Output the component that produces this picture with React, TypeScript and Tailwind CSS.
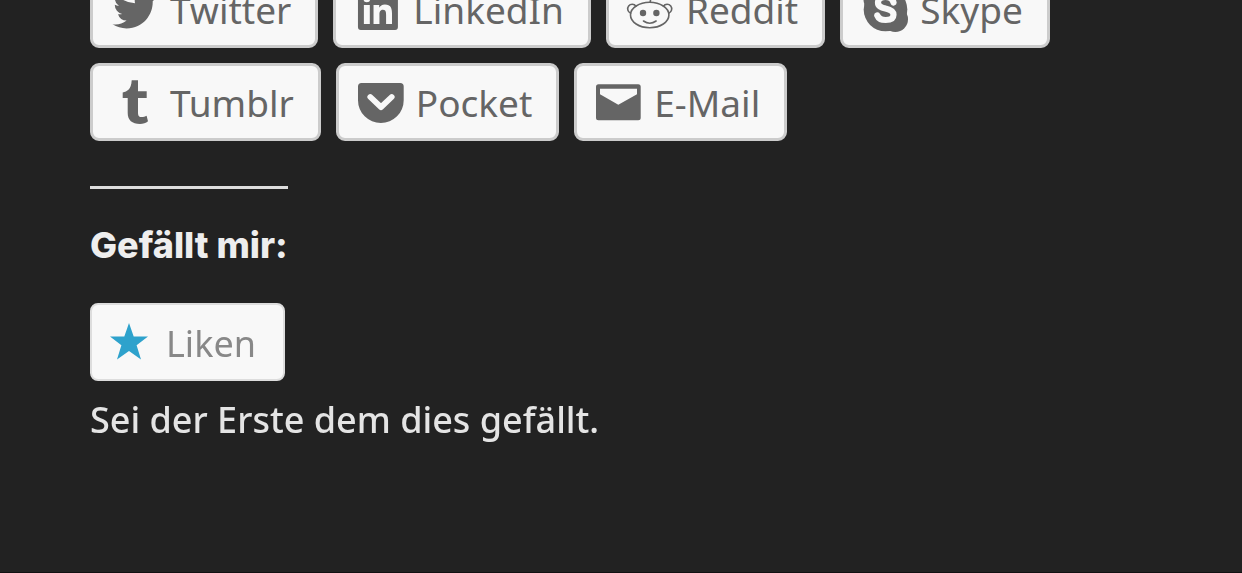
import type { ReactNode } from "react";

function Icon({ children }: { children: ReactNode }) {
  return (
    <svg viewBox="0 0 48 48" className="size-12 shrink-0 overflow-visible fill-current" aria-hidden="true">
      {children}
    </svg>
  );
}

const twitter = (
  <Icon>
    <path
      transform="translate(-3 -1.9) scale(2.24)"
      d="M22.23 5.924a8.212 8.212 0 01-2.357.646 4.115 4.115 0 001.804-2.27 8.221 8.221 0 01-2.606.996 4.103 4.103 0 00-6.991 3.742 11.647 11.647 0 01-8.457-4.287 4.087 4.087 0 00-.556 2.063 4.1 4.1 0 001.825 3.415 4.09 4.09 0 01-1.859-.513v.052a4.104 4.104 0 003.292 4.023 4.099 4.099 0 01-1.853.07 4.11 4.11 0 003.833 2.85A8.236 8.236 0 012 18.411a11.616 11.616 0 006.29 1.843c7.547 0 11.675-6.252 11.675-11.675 0-.178-.004-.355-.012-.531a8.298 8.298 0 002.047-2.123z"
    />
  </Icon>
);

const linkedin = (
  <Icon>
    <path
      transform="translate(-2.7 -1.7) scale(2.22)"
      d="M19.7 3H4.3A1.3 1.3 0 003 4.3v15.4A1.3 1.3 0 004.3 21h15.4a1.3 1.3 0 001.3-1.3V4.3A1.3 1.3 0 0019.7 3zM8.339 18.338H5.667v-8.59h2.672v8.59zM7.004 8.574a1.548 1.548 0 11-.002-3.096 1.548 1.548 0 01.002 3.096zm11.335 9.764H15.67v-4.177c0-.996-.017-2.278-1.387-2.278-1.389 0-1.601 1.086-1.601 2.206v4.249h-2.667v-8.59h2.559v1.174h.037c.356-.675 1.227-1.387 2.526-1.387 2.703 0 3.203 1.779 3.203 4.092v4.711z"
    />
  </Icon>
);

const reddit = (
  <Icon>
    <g fill="none" stroke="currentColor" strokeWidth="1.6" strokeLinecap="round">
      <ellipse cx="22.7" cy="30" rx="19.2" ry="12.7" />
      <path d="M3.6 28.2A4.6 4.6 0 1 1 9 21.2M41.8 28.2A4.6 4.6 0 1 0 36.4 21.2" />
      <path d="M23.2 17.3L24.5 7.5l8 1.8" />
      <path d="M16.5 36q6.2 4.4 12.6 0" />
      <circle cx="36" cy="10" r="3" />
    </g>
    <circle cx="16" cy="28" r="3.2" />
    <circle cx="29.4" cy="28" r="3.2" />
  </Icon>
);

const skype = (
  <Icon>
    <circle cx="24.5" cy="24.5" r="21.8" />
    <circle cx="15" cy="14.5" r="12.5" />
    <circle cx="34.3" cy="34.3" r="12.7" />
    <path
      d="M32.5 17.5C31.5 13.8 28.5 12 24.5 12C19.500 12 17 14.500 17 17.700C17 21.500 20.500 22.500 24.500 23.500C29 24.500 32.500 25.700 32.500 29.700C32.500 33.300 29.500 35 24.700 35C20.200 35 17.500 33.500 16.300 30.500"
      fill="none"
      stroke="#f8f8f8"
      strokeWidth="6.2"
      strokeLinecap="round"
    />
  </Icon>
);

const tumblr = (
  <Icon>
    <path d="M20.7 2.3H27v11h8.7V20H27v14.5c0 4 1.6 4.6 3.6 4.6 1.8 0 3.6-.6 5-1.4l1.4 5.6c-2 1.7-5 2.6-8 2.6-8 0-12.3-4-12.3-11V20h-5v-5.4c4.500-1.300 8.500-3 9-12.300z" />
  </Icon>
);

const pocket = (
  <Icon>
    <path d="M4.5 5H43.2a3.5 3.5 0 0 1 3.5 3.5V22.2a22.85 22.85 0 0 1-45.7 0V8.5A3.5 3.5 0 0 1 4.5 5z" />
    <path d="M13.3 19L24 29.2 34.7 19" fill="none" stroke="#f8f8f8" strokeWidth="5.8" strokeLinecap="round" strokeLinejoin="round" />
  </Icon>
);

const mail = (
  <Icon>
    <path
      fillRule="evenodd"
      d="M3.5 6.3H43.2a2.5 2.5 0 0 1 2.5 2.5V39.8a2.5 2.5 0 0 1-2.5 2.5H3.5A2.5 2.5 0 0 1 1 39.8V8.8A2.5 2.5 0 0 1 3.5 6.3zM5 10.7V16.3L23.3 26.7 42 16.3V10.7z"
    />
  </Icon>
);

const rows = [
  [
    { label: "Twitter", icon: twitter },
    { label: "LinkedIn", icon: linkedin },
    { label: "Reddit", icon: reddit },
    { label: "Skype", icon: skype },
  ],
  [
    { label: "Tumblr", icon: tumblr },
    { label: "Pocket", icon: pocket },
    { label: "E-Mail", icon: mail },
  ],
];

export default function App() {
  return (
    <main className="min-h-screen overflow-hidden border-b border-[#111111] bg-[#222222] px-[90px] font-['Noto_Sans',sans-serif]">
      <ul className="-mt-[30px] flex flex-col gap-[15px]">
        {rows.map((row, i) => (
          <li key={i}>
            <ul className="flex gap-[15px]">
              {row.map(({ label, icon }) => (
                <li key={label}>
                  <a
                    href="#"
                    className="flex h-[78px] items-center gap-[11px] rounded-[9px] border-3 border-[#cccccc] bg-[#f8f8f8] pr-6 pl-[18px] text-[37px] leading-[48px] whitespace-nowrap text-[#656565]"
                  >
                    {icon}
                    <span className="pt-0.5">{label}</span>
                  </a>
                </li>
              ))}
            </ul>
          </li>
        ))}
      </ul>

      <section className="mt-[45px] flex flex-col items-start">
        <h3 className="border-t-3 border-[#dddddd] pt-8 font-['Inter',sans-serif] text-[36px] leading-[48px] font-extrabold whitespace-nowrap text-[#eeeeee]">
          Gefällt mir:
        </h3>
        <button
          type="button"
          className="mt-[34px] flex h-[78px] items-center gap-[18px] rounded-[8px] border-2 border-[#dddddd] bg-[#f8f8f8] pr-[27px] pl-[18px] text-[36px] leading-[48px] text-[#888888]"
        >
          <svg viewBox="0 0 38 38" className="size-[38px] shrink-0 fill-[#2ea2cc] blur-[0.7px]" aria-hidden="true">
            <path d="M19 0l4.7 13.5H38L26.600 22.200 31 36.500 19 28 7 36.500l4.400-14.300L0 13.500h14.300z" />
          </svg>
          <span className="pt-1 blur-[0.7px]">Liken</span>
        </button>
        <p className="mt-[15px] text-[36px] leading-[48px] font-medium whitespace-nowrap text-[#e4e4e4] blur-[0.7px]">
          Sei der Erste dem dies gefällt.
        </p>
      </section>
    </main>
  );
}
